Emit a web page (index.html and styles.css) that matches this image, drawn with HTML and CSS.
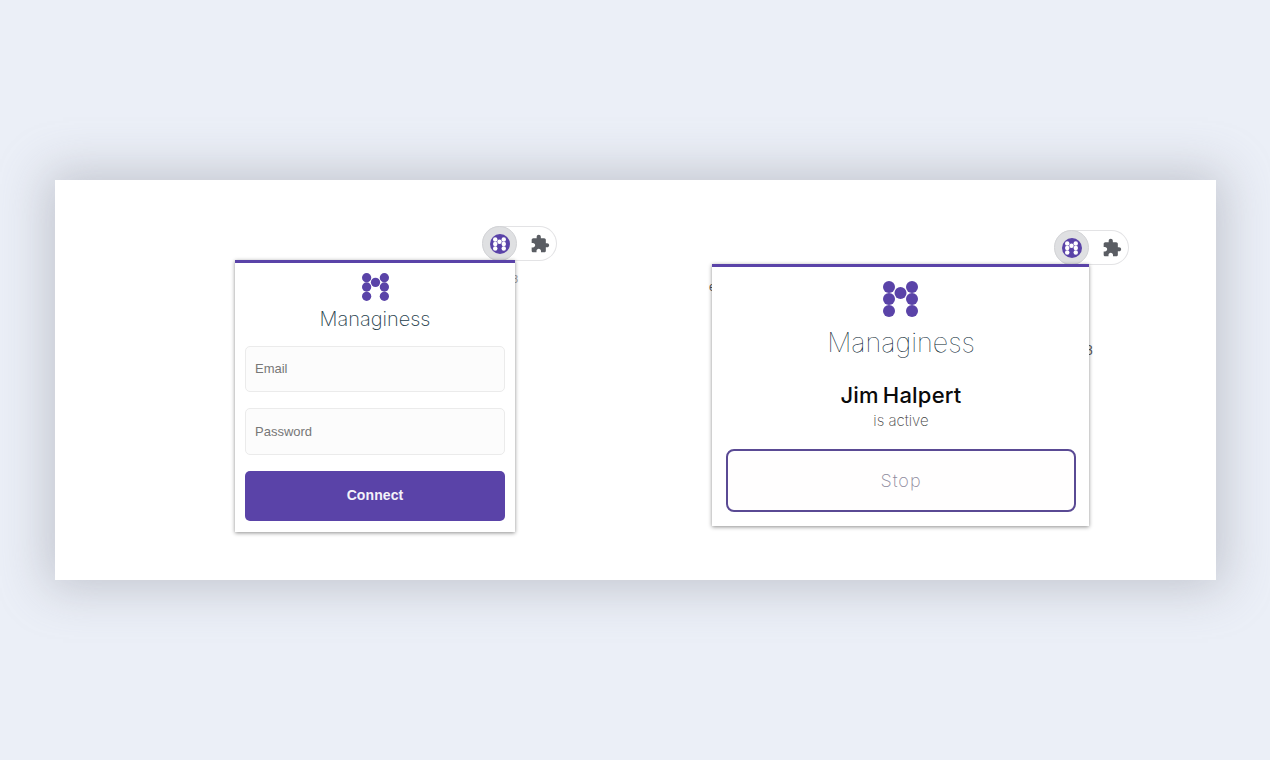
FILE: index.html
```html
<!DOCTYPE html>
<html lang="en">
<head>
    <meta charset="UTF-8">
    <title>Managiness</title>
    <link rel="stylesheet" href="styles.css">
</head>
<body>
    <svg class="defs" width="0" height="0">
        <symbol id="logo" viewBox="0 0 35 36">
            <circle cx="6" cy="6" r="6"/>
            <circle cx="29" cy="6" r="6"/>
            <circle cx="17.5" cy="12" r="6"/>
            <circle cx="6" cy="18" r="6"/>
            <circle cx="29" cy="18" r="6"/>
            <circle cx="6" cy="30" r="6"/>
            <circle cx="29" cy="30" r="6"/>
        </symbol>
        <symbol id="puzzle" viewBox="0 0 24 24">
            <path d="M20.5 11H19V7c0-1.1-.9-2-2-2h-4V3.5C13 2.12 11.88 1 10.5 1S8 2.12 8 3.5V5H4c-1.1 0-1.99.9-1.99 2v3.8H3.5c1.49 0 2.7 1.21 2.7 2.7s-1.21 2.7-2.7 2.7H2V20c0 1.1.9 2 2 2h3.8v-1.5c0-1.49 1.21-2.7 2.7-2.7 1.49 0 2.7 1.21 2.7 2.7V22H17c1.1 0 2-.9 2-2v-4h1.5c1.38 0 2.5-1.12 2.5-2.5S21.88 11 20.5 11z"/>
        </symbol>
    </svg>

    <div class="card">
        <!-- login popup -->
        <div class="shot shot-login">
            <div class="toolbar">
                <span class="ext-active"><span class="ext-badge"><svg class="ext-logo"><use href="#logo"/></svg></span></span>
                <svg class="ext-puzzle"><use href="#puzzle"/></svg>
            </div>
            <span class="peek peek-login">8</span>
            <div class="popup popup-login">
                <svg class="logo logo-small"><use href="#logo"/></svg>
                <div class="brand brand-small">Managiness</div>
                <div class="field">Email</div>
                <div class="field">Password</div>
                <button class="connect" type="button">Connect</button>
            </div>
        </div>

        <!-- active user popup -->
        <div class="shot shot-active">
            <div class="toolbar">
                <span class="ext-active"><span class="ext-badge"><svg class="ext-logo"><use href="#logo"/></svg></span></span>
                <svg class="ext-puzzle"><use href="#puzzle"/></svg>
            </div>
            <span class="peek peek-left">e</span>
            <span class="peek peek-right">8</span>
            <div class="popup popup-active">
                <svg class="logo logo-large"><use href="#logo"/></svg>
                <div class="brand brand-large">Managiness</div>
                <div class="user-name">Jim Halpert</div>
                <div class="user-status">is active</div>
                <button class="stop" type="button">Stop</button>
            </div>
        </div>
    </div>
</body>
</html>
```

FILE: styles.css
```css
* {
    margin: 0;
    padding: 0;
    box-sizing: border-box;
}

html, body {
    width: 100%;
    height: 100%;
    background-color: #ebeff7;
    overflow: hidden;
}

body {
    font-family: Inter, "Liberation Sans", sans-serif;
    padding: 180px 54px 0 55px;
}

.defs {
    display: block;
    height: 0;
}

.card {
    display: flex;
    align-items: flex-start;
    gap: 155px;
    height: 400px;
    padding-left: 180px;
    background: #fff;
    box-shadow: 0 0 45px 8px rgba(150,153,162,0.48);
}

.shot {
    display: flex;
    flex-direction: column;
    align-items: flex-end;
    position: relative;
}
.shot-login {
    margin-top: 46px;
}
.shot-active {
    margin-top: 50px;
}

/* bits of the page behind the popups */
.peek {
    position: absolute;
    font-family: "Liberation Sans", Arial, sans-serif;
    color: #555;
}
.peek-login {
    left: 277px;
    top: 47px;
    font-size: 11px;
    color: #999;
}
.peek-left {
    left: -3px;
    top: 50px;
    font-size: 12px;
}
.peek-right {
    left: 373px;
    top: 112px;
    font-size: 14px;
}

/* browser toolbar pill */
.toolbar {
    display: flex;
    align-items: center;
    width: 75px;
    height: 35px;
    border: 1px solid #e3e3e5;
    border-left: none;
    border-radius: 18px;
    background: #fff;
    margin-bottom: -1px;
    position: relative;
    z-index: 1;
}
.ext-active {
    display: flex;
    align-items: center;
    justify-content: center;
    width: 35px;
    height: 35px;
    border-radius: 50%;
    background: #dfe0e2;
    border: 1px solid #d2d3d6;
    flex-shrink: 0;
}
.ext-badge {
    display: flex;
    align-items: center;
    justify-content: center;
    width: 20px;
    height: 20px;
    border-radius: 50%;
    background: #5a43a8;
}
.ext-logo {
    width: 13px;
    height: 14px;
    fill: #fff;
}
.ext-puzzle {
    width: 20px;
    height: 20px;
    margin-left: 13px;
    fill: #5a5d63;
}

.popup {
    display: flex;
    flex-direction: column;
    align-items: center;
    position: relative;
    z-index: 1;
    background: #fff;
    border-top: 3px solid #5a43a8;
    box-shadow: 0 1px 4px rgba(0,0,0,0.45);
}
.popup-login {
    width: 280px;
    height: 272px;
    margin-right: 42px;
    padding: 10px 10px 0;
}
.popup-active {
    width: 377px;
    height: 262px;
    margin-right: 40px;
    padding: 14px 13px 0 14px;
}

.logo {
    fill: #5a43a8;
    flex-shrink: 0;
}
.logo-small {
    width: 27px;
    height: 28px;
}
.logo-large {
    width: 35px;
    height: 36px;
    margin-right: 2px;
}

.brand {
    font-weight: 200;
    color: #263e4c;
    white-space: nowrap;
}
.brand-small {
    font-size: 20px;
    line-height: 26px;
    margin-top: 5px;
}
.brand-large {
    font-size: 27px;
    font-weight: 100;
    line-height: 34px;
    margin-top: 9px;
    color: #00162a;
}

/* login form */
.field {
    width: 100%;
    height: 46px;
    margin-top: 14px;
    padding-left: 9px;
    border: 1px solid #ebebeb;
    border-radius: 5px;
    background: #fcfcfc;
    font-family: "Liberation Sans", Arial, sans-serif;
    font-size: 13px;
    line-height: 43px;
    color: #777;
}
.field + .field {
    margin-top: 16px;
    height: 47px;
    line-height: 45px;
}
.connect {
    width: 100%;
    height: 50px;
    margin-top: 16px;
    padding-bottom: 2px;
    border: none;
    border-radius: 5px;
    background: #5a43a8;
    color: #f4f2fa;
    font-family: "Liberation Sans", Arial, sans-serif;
    font-size: 14px;
    font-weight: bold;
    letter-spacing: 0.1px;
}

/* active state */
.user-name {
    margin-top: 21px;
    font-size: 22px;
    line-height: 28px;
    font-weight: 500;
    letter-spacing: 0.2px;
    word-spacing: -2px;
    color: #0a0a0a;
}
.user-status {
    margin-top: 2px;
    font-size: 15px;
    font-weight: 200;
    line-height: 20px;
    color: #444;
}
.stop {
    width: 100%;
    height: 63px;
    margin-top: 18px;
    border: 2px solid #5a4a94;
    border-radius: 8px;
    background: #fffefe;
    color: #8d8a9c;
    font-family: Inter, "Liberation Sans", sans-serif;
    font-size: 18px;
    font-weight: 200;
    letter-spacing: 1px;
}
```
